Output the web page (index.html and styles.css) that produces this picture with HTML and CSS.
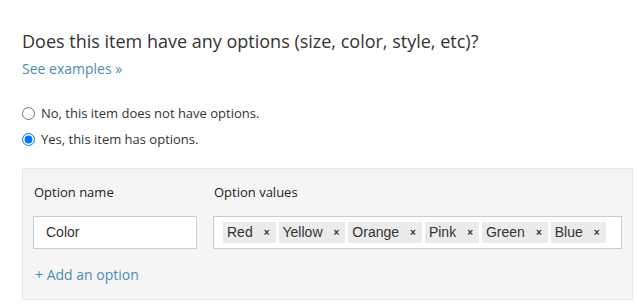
FILE: index.html
```html
<!DOCTYPE html>
<html lang="en">
<head>
    <meta charset="UTF-8">
    <title>Item options</title>
    <link rel="stylesheet" href="styles.css">
</head>
<body>
    <div class="seccion">
        <h2 class="pregunta">Does this item have any options (size, color, style, etc)?</h2>
        <a class="enlace" href="#">See examples &raquo;</a>

        <div class="opciones-radio">
            <label class="radio"><input type="radio" name="tiene-opciones"> No, this item does not have options.</label>
            <label class="radio"><input type="radio" name="tiene-opciones" checked> Yes, this item has options.</label>
        </div>

        <!-- Panel de opciones -->
        <div class="panel">
            <div class="fila">
                <div class="etiqueta">Option name</div>
                <div class="etiqueta">Option values</div>
                <div class="campo">Color</div>
                <div class="campo campo-tags">
                    <span class="tag">Red<span class="quitar">&times;</span></span>
                    <span class="tag">Yellow<span class="quitar">&times;</span></span>
                    <span class="tag">Orange<span class="quitar">&times;</span></span>
                    <span class="tag">Pink<span class="quitar">&times;</span></span>
                    <span class="tag">Green<span class="quitar">&times;</span></span>
                    <span class="tag">Blue<span class="quitar">&times;</span></span>
                </div>
            </div>
            <a class="enlace agregar" href="#">+ Add an option</a>
        </div>
    </div>
</body>
</html>
```

FILE: styles.css
```css
body {
    margin: 0;
    background: #fff;
    font-family: "Open Sans", Arial, sans-serif;
    color: #333;
}
.seccion {
    padding: 29px 4px 0 22px;
}
.pregunta {
    margin: 0;
    font-size: 18px;
    line-height: 24px;
    font-weight: normal;
    color: #333;
}
.enlace {
    display: block;
    width: fit-content;
    margin-top: 6px;
    font-size: 14px;
    line-height: 20px;
    color: #4a8db3;
    text-decoration: none;
}
.opciones-radio {
    margin-top: 24px;
}
.radio {
    display: flex;
    align-items: center;
    gap: 6px;
    font-size: 13px;
    line-height: 20px;
    margin-bottom: 6px;
    color: #333;
}
.radio input {
    margin: 0;
    width: 13px;
    height: 13px;
}
.panel {
    margin-top: 19px;
    background: #f5f5f5;
    border: 1px solid #e8e8e8;
    padding: 14px 10px 14px 10px;
}
.fila {
    display: grid;
    grid-template-columns: 164px 1fr;
    column-gap: 16px;
    row-gap: 15px;
}
.etiqueta {
    font-size: 13px;
    line-height: 18px;
    font-weight: 500;
    padding-left: 1px;
    color: #222;
}
.campo {
    height: 33px;
    box-sizing: border-box;
    background: #fff;
    border: 1px solid #ccc;
    padding: 0 12px;
    font-family: "Liberation Sans", Arial, sans-serif;
    font-size: 14px;
    line-height: 31px;
    color: #333;
}
.campo-tags {
    display: flex;
    align-items: center;
    gap: 3px;
    padding: 0 9px;
}
.tag {
    display: flex;
    align-items: center;
    height: 21px;
    background: #ebebeb;
    padding: 0 6px 0 4px;
    line-height: 21px;
}
.quitar {
    margin-left: 11px;
    font-size: 10px;
    font-weight: bold;
}
.agregar {
    margin-top: 16px;
    margin-left: 2px;
}
```
